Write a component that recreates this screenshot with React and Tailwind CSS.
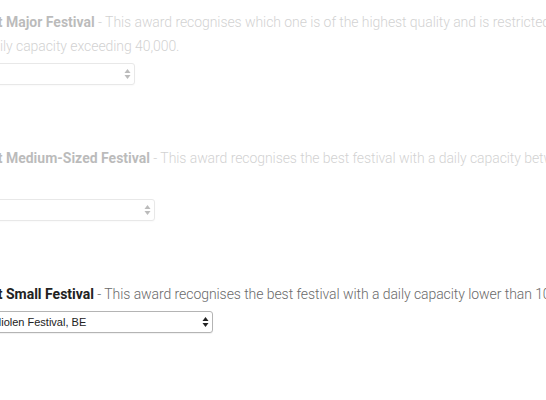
import React from 'react';

const awards = [
  {
    title: 'Best Major Festival',
    lines: [
      'This award recognises which one is of the highest quality and is restricted to festivals with',
      'a daily capacity exceeding 40,000.',
    ],
    selectWidth: 'w-[161px]',
    value: '',
    disabled: true,
  },
  {
    title: 'Best Medium-Sized Festival',
    lines: [
      'This award recognises the best festival with a daily capacity between 10,000 and 39,9',
      '99.',
    ],
    selectWidth: 'w-[181px]',
    value: '',
    disabled: true,
  },
  {
    title: 'Best Small Festival',
    lines: ['This award recognises the best festival with a daily capacity lower than 10,000.'],
    selectWidth: 'w-[239px]',
    value: 'Gladiolen Festival, BE',
    disabled: false,
  },
];

function UpDownArrows() {
  return (
    <svg width="7" height="12" viewBox="0 0 7 12" className="absolute right-[4px] top-1/2 -translate-y-1/2 pointer-events-none">
      <path d="M3.5 1 L6.5 5 L0.5 5 Z" fill="currentColor" />
      <path d="M3.5 11 L6.5 7 L0.5 7 Z" fill="currentColor" />
    </svg>
  );
}

function AwardRow({ award }) {
  return (
    <div className={award.disabled ? 'opacity-30' : ''}>
      <p className="text-[14px] leading-[24px] font-light text-[#6a6a6a] whitespace-nowrap tracking-[-0.07px]">
        <span className="font-bold text-[#222] tracking-normal">{award.title}</span>
        {' - '}
        {award.lines.map((line, i) => (
          <React.Fragment key={i}>
            {i > 0 && <br />}
            {line}
          </React.Fragment>
        ))}
      </p>
      <div className={`relative ${award.selectWidth} mt-[5px] text-[#222]`}>
        <select
          defaultValue={award.value}
          className="appearance-none block w-full h-[22px] pl-[3px] pr-4 rounded-[3px] border border-[#b4b4b4] bg-white text-[11px] text-[#222] shadow-[0_1px_1px_rgba(0,0,0,0.06)] outline-none"
          style={{ fontFamily: '"Liberation Sans", Arial, sans-serif' }}
        >
          <option value=""></option>
          <option value="Gladiolen Festival, BE">Gladiolen Festival, BE</option>
        </select>
        <UpDownArrows />
      </div>
    </div>
  );
}

export default function App() {
  return (
    <div
      className="w-full h-[400px] overflow-hidden bg-white"
      style={{ fontFamily: 'Roboto, "Liberation Sans", sans-serif' }}
    >
      <div className="ml-[-26px] w-[900px] pt-[10px] flex flex-col gap-[61px]">
        {awards.map((a) => (
          <AwardRow key={a.title} award={a} />
        ))}
      </div>
    </div>
  );
}
